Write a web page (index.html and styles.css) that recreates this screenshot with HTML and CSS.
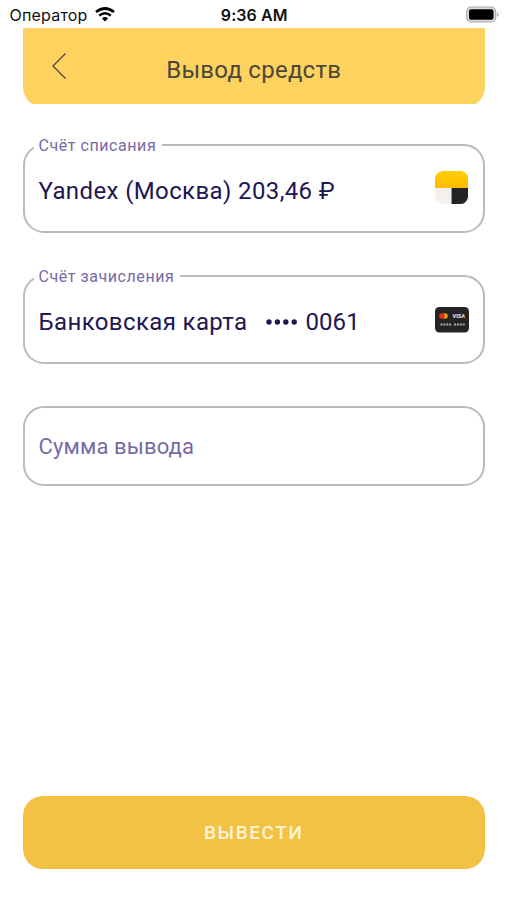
FILE: index.html
```
<!DOCTYPE html>
<html lang="ru">
<head>
<meta charset="utf-8">
<title>Вывод средств</title>
<link rel="stylesheet" href="styles.css">
</head>
<body>
<div class="status">
  <div class="carrier"><span class="operator">Оператор</span>
    <svg class="wifi" width="20" height="15" viewBox="0 0 20 15"><path d="M1 5Q10-2 19 5" fill="none" stroke="#000" stroke-width="2.8"/><path d="M4.2 8.6Q10 3.9 15.8 8.6" fill="none" stroke="#000" stroke-width="2.5"/><path d="M7 11.4Q10 8.8 13 11.4L10 14.4Z"/></svg>
  </div>
  <span class="time">9:36 AM</span>
  <svg class="battery" width="34" height="18" viewBox="0 0 34 18"><rect x="1.7" y="1" width="29" height="15" rx="4.5" fill="#ddd" stroke="#aaa" stroke-width="1.2"/><rect x="4" y="3.3" width="24.5" height="10.4" rx="2"/><path d="M32.2 6.2Q33.6 7 33.6 8.6T32.2 11Z" fill="#aaa"/></svg>
</div>
<header class="header">
  <div class="header-fill">
    <svg class="back" width="16" height="28" viewBox="0 0 16 28"><path d="M14.5 1.5L2 14L14.5 26.5" fill="none" stroke="#574d39" stroke-width="1.4"/></svg>
    <h1 class="title">Вывод средств</h1>
  </div>
</header>
<main class="form">
  <fieldset class="field">
    <legend class="label"><span class="label-from">Счёт списания</span></legend>
    <div class="row">
      <span class="value value-from">Yandex (Москва) 203,46 ₽</span>
      <svg class="icon" width="36" height="36" viewBox="0 0 36 36"><defs><linearGradient id="gold" x2="0" y2="1"><stop stop-color="#ffd000"/><stop offset="1" stop-color="#ffb900"/></linearGradient></defs><path d="M1 18V8Q1 6 3 4T8 1H27Q30 1 32 3.5T34 8V18Z" fill="url(#gold)"/><path d="M1 18H17V34H8Q5 34 3 32T1 27Z" fill="#f3f0ed"/><path d="M17.5 18H34V27Q34 29 32 31.5T27 34H17.5Z" fill="#242424"/></svg>
    </div>
  </fieldset>
  <fieldset class="field">
    <legend class="label"><span class="label-to">Счёт зачисления</span></legend>
    <div class="row">
      <span class="value"><span class="bank">Банковская карта</span><svg class="dots" width="32" height="8" viewBox="0 0 32 8"><g fill="#211653"><circle cx="3" cy="4" r="2.7"/><circle cx="11.4" cy="4" r="2.7"/><circle cx="19.8" cy="4" r="2.7"/><circle cx="28.2" cy="4" r="2.7"/></g></svg><span class="digits">0061</span></span>
      <svg class="icon" width="36" height="36" viewBox="0 0 36 36"><rect x="1" y="6" width="34" height="25.5" rx="4.5" fill="#242424"/><circle cx="11" cy="15" r="2.7" fill="#f2a31b"/><circle cx="8" cy="15" r="2.8" fill="#e92c16"/><text class="visa" x="18.5" y="17.2" textLength="12.5" lengthAdjust="spacingAndGlyphs">VISA</text><path d="M6.5 23.5H17.5M20 23.5H31" stroke="#aaa" stroke-width="2" stroke-dasharray="2 .9"/></svg>
    </div>
  </fieldset>
  <div class="amount"><span class="placeholder">Сумма вывода</span></div>
</main>
<button class="submit" type="button">ВЫВЕСТИ</button>
</body>
</html>
```
FILE: styles.css
```
* { box-sizing: border-box; }
body {
  margin: 0;
  padding: 0 22px 31px 22.5px;
  width: 507px;
  height: 900px;
  display: flex;
  flex-direction: column;
  background: #fff;
  font-family: Roboto, "Liberation Sans", sans-serif;
}
.status {
  display: grid;
  grid-template-columns: 1fr auto 1fr;
  align-items: center;
  height: 28px;
  flex: none;
  margin: 0 -14px 0 -13px;
  padding-top: 1px;
  font: 16px/20px Inter, sans-serif;
  color: #111;
}
.carrier { display: flex; align-items: center; gap: 7px; }
.operator { letter-spacing: .2px; }
.time { font-weight: 600; letter-spacing: .1px; }
.battery { justify-self: end; }
.header {
  height: 75.5px;
  flex: none;
  overflow: hidden;
}
.header-fill {
  height: 79px;
  display: grid;
  grid-template-columns: 60px 1fr 60px;
  background: #fed25f;
  border-radius: 0 0 20px 20px;
}
.back { margin: 24px 0 0 28px; }
.title {
  margin: 28px 0 0;
  font-weight: 400;
  font-size: 24px;
  line-height: 28px;
  letter-spacing: .25px;
  text-align: center;
  color: #4c473c;
}
.form { display: flex; flex-direction: column; margin-top: 32.5px; }
.field {
  min-width: 0;
  height: 97px;
  margin: 0 0 34px;
  padding: 0 14px;
  border: 2px solid #bbb;
  border-radius: 21px;
}
.field + .amount { margin-top: 8px; }
.label {
  height: 18px;
  margin-left: -5px;
  padding: 0 6px 0 5px;
  font-size: 16px;
  line-height: 20px;
  letter-spacing: .57px;
  color: #776aa5;
}
.row {
  display: flex;
  align-items: center;
  justify-content: space-between;
  height: 73px;
}
.value {
  display: flex;
  align-items: center;
  font-size: 24px;
  line-height: 32px;
  letter-spacing: .38px;
  color: #211653;
  white-space: pre;
}
.dots { margin-left: 19px; }
.digits { margin-left: 7px; letter-spacing: .1px; }
.icon { flex: none; margin: 0 -1px 6px 0; }
.visa { font: italic 900 6px Roboto, sans-serif; fill: #ddd; }
.amount {
  display: flex;
  align-items: center;
  height: 80px;
  padding: 0 14px;
  border: 2px solid #bbb;
  border-radius: 21px;
}
.placeholder {
  font-size: 22px;
  letter-spacing: .13px;
  color: #776aa5;
}
.submit {
  height: 73px;
  margin-top: auto;
  padding: 0;
  border: 0;
  border-radius: 20px;
  background: #f3c143;
  font: 500 19px/24px Roboto, sans-serif;
  letter-spacing: 1.6px;
  color: #fff5d6;
}
```
